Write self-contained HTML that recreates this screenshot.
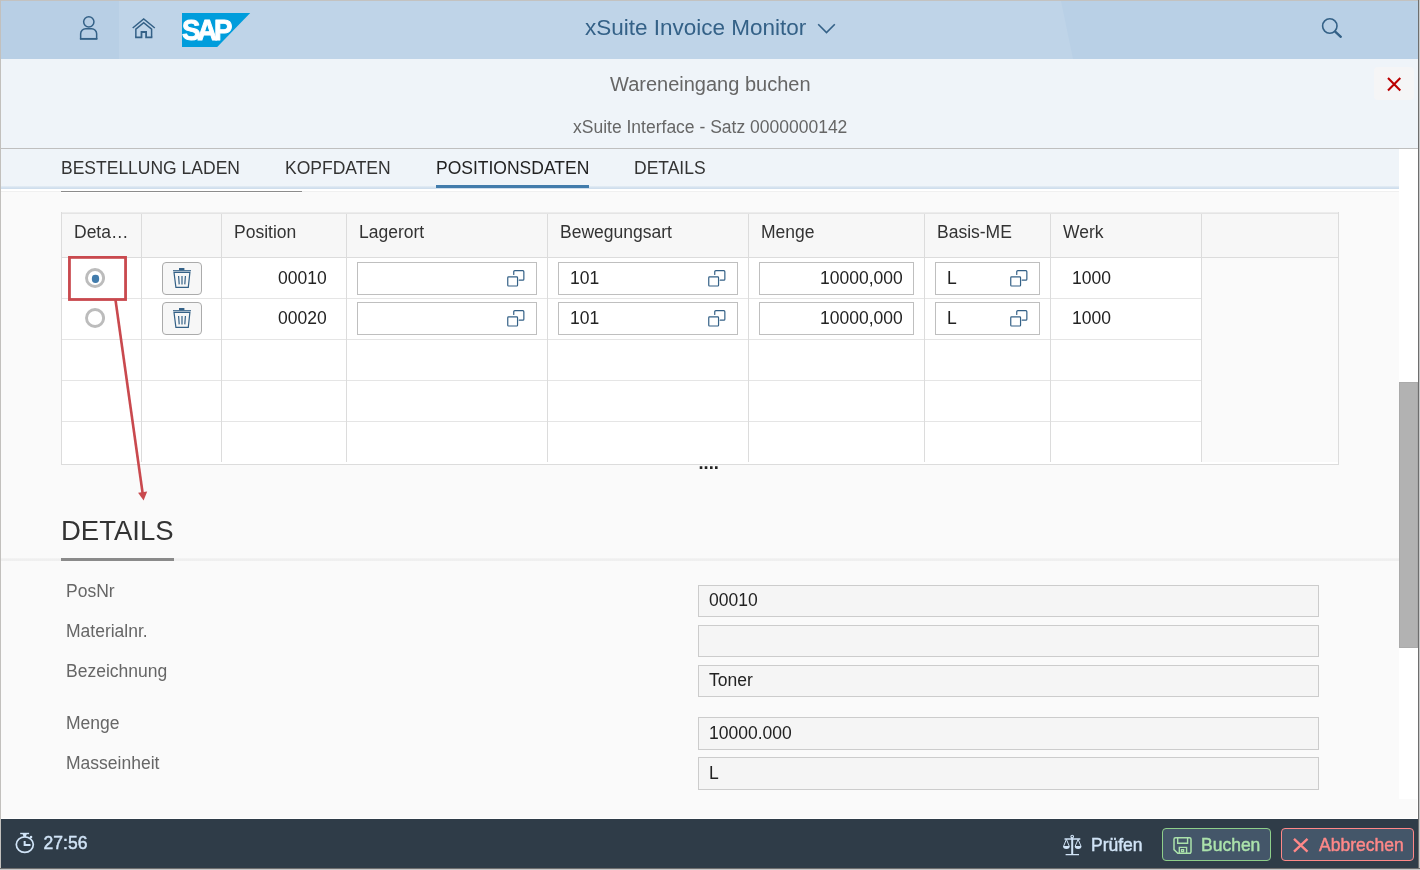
<!DOCTYPE html>
<html lang="de">
<head>
<meta charset="utf-8">
<title>xSuite Invoice Monitor</title>
<style>
html,body{margin:0;padding:0;}
body{width:1420px;height:870px;overflow:hidden;position:relative;background:#fafafa;font-family:"Liberation Sans",sans-serif;color:#333;}
#root{position:absolute;left:0;top:0;width:1420px;height:870px;will-change:transform;}
.abs{position:absolute;}
.t{position:absolute;white-space:nowrap;line-height:1;}
#frame-t{left:0;top:0;width:1420px;height:1px;background:#c3c2c0;}
#frame-l{left:0;top:0;width:1px;height:870px;background:#c2c0bd;}
#frame-r{left:1418px;top:0;width:2px;height:870px;background:linear-gradient(90deg,#6e6e6e,#6e6e6e 1px,#c8c8c8 1px);}
#frame-b{left:0;top:868px;width:1420px;height:2px;background:linear-gradient(#6e6e6e,#6e6e6e 1px,#c8c8c8 1px);}
#shell{left:1px;top:1px;width:1417px;height:58px;background:#bfd4e8;}
#shell .dk1{left:0;top:0;width:118px;height:58px;background:#b8cfe5;}
#subhdr{left:1px;top:59px;width:1417px;height:89px;background:#eff4f9;}
#subline{left:1px;top:148px;width:1417px;height:1px;background:#bfbfbf;}
#tabbar{left:1px;top:149px;width:1398px;height:37px;background:#eff4f9;}
#tabbar-b{left:1px;top:186px;width:1398px;height:3px;background:linear-gradient(#e5edf5,#d5e2ef 50%,#ccdcec);}
#content{left:1px;top:189px;width:1417px;height:630px;background:linear-gradient(#fff,#fff 2px,#fafafa 3px);}
#scroll{left:1399px;top:149px;width:19px;height:650px;background:#fff;}
#wrow{left:1px;top:818px;width:1417px;height:1px;background:#fff;}
#wcol{left:1417px;top:799px;width:1px;height:20px;background:#fff;}
#thumb{left:1399px;top:382px;width:19px;height:266px;background:#b2b2b2;box-shadow:inset 0 0 0 1px #aaa;}
#footer{left:1px;top:819px;width:1417px;height:49px;background:#2f3c48;}
.tab{font-size:17.5px;color:#333;top:160px;}
.hd{font-size:17.5px;color:#333;top:224px;}
.cell{font-size:17.5px;color:#222;}
.inp{position:absolute;box-sizing:border-box;background:#fff;border:1px solid #bfbfbf;height:33px;}
.ro{position:absolute;box-sizing:border-box;background:#f5f5f5;border:1px solid #ccc;height:32px;left:698px;width:621px;}
.lbl{font-size:17.5px;color:#666;left:66px;}
.val{font-size:17.5px;color:#222;left:709px;}
.ft{font-size:17.5px;-webkit-text-stroke:0.45px currentColor;}
.btn{position:absolute;box-sizing:border-box;border-radius:4px;height:33px;top:828px;background:#445669;}
</style>
</head>
<body>
<div id="root">
<div id="shell" class="abs"><div class="abs dk1"></div><div class="abs" style="left:1055px;top:0;width:362px;height:58px;background:#b9d0e6;clip-path:polygon(5px 0,100% 0,100% 100%,17px 100%);"></div></div>
<div id="subhdr" class="abs"></div>
<div id="subline" class="abs"></div>
<div id="tabbar" class="abs"></div>
<div id="tabbar-b" class="abs"></div>
<div id="content" class="abs"></div>
<div id="scroll" class="abs"></div>
<div id="thumb" class="abs"></div>
<div id="wrow" class="abs"></div>
<div id="wcol" class="abs"></div>
<div id="footer" class="abs"></div>
<!-- shell -->
<div class="t" id="apptitle" style="left:585px;top:17px;font-size:22.5px;color:#346187;">xSuite Invoice Monitor</div>
<!-- sub header -->
<div class="t" id="ptitle" style="left:610px;top:74px;font-size:20px;color:#666;">Wareneingang buchen</div>
<div class="t" id="psub" style="left:573px;top:119px;font-size:17.5px;color:#666;">xSuite Interface - Satz 0000000142</div>
<!-- tabs -->
<div class="t tab" style="left:61px;">BESTELLUNG LADEN</div>
<div class="t tab" style="left:285px;">KOPFDATEN</div>
<div class="t tab" style="left:436px;color:#222;">POSITIONSDATEN</div>
<div class="t tab" style="left:634px;">DETAILS</div>
<div class="abs" style="left:436px;top:185px;width:153px;height:3px;background:#427cac;"></div>
<div class="abs" style="left:1px;top:191px;width:1398px;height:1px;background:#f0f0f0;"></div>
<div class="abs" style="left:61px;top:191px;width:241px;height:2px;background:linear-gradient(#8c8c8c,#8c8c8c 1px,#fff 1px);"></div>
<!-- table -->
<div class="abs" style="left:61px;top:212px;width:1278px;height:46px;background:#f7f7f7;"></div>
<div class="abs" style="left:62px;top:258px;width:1276px;height:206px;background:#fff;"></div>
<div class="abs" style="left:1202px;top:258px;width:136px;height:204px;background:#fafafa;"></div>
<div class="abs" style="left:61px;top:212px;width:1278px;height:2px;background:linear-gradient(#ececec,#ececec 1px,#e4e4e4 1px);"></div>
<div class="abs" style="left:61px;top:257px;width:1278px;height:1px;background:#dcdcdc;"></div>
<div class="abs" style="left:61px;top:298px;width:1141px;height:1px;background:#e5e5e5;"></div>
<div class="abs" style="left:61px;top:339px;width:1141px;height:1px;background:#e5e5e5;"></div>
<div class="abs" style="left:61px;top:380px;width:1141px;height:1px;background:#e5e5e5;"></div>
<div class="abs" style="left:61px;top:421px;width:1141px;height:1px;background:#e5e5e5;"></div>
<div class="abs" style="left:61px;top:464px;width:1278px;height:1px;background:#dcdcdc;"></div>
<div class="abs" style="left:61px;top:212px;width:1px;height:253px;background:#dcdcdc;"></div>
<div class="abs" style="left:141px;top:214px;width:1px;height:43px;background:#dcdcdc;"></div>
<div class="abs" style="left:141px;top:258px;width:1px;height:204px;background:#dcdcdc;"></div>
<div class="abs" style="left:221px;top:214px;width:1px;height:43px;background:#dcdcdc;"></div>
<div class="abs" style="left:221px;top:258px;width:1px;height:204px;background:#dcdcdc;"></div>
<div class="abs" style="left:346px;top:214px;width:1px;height:43px;background:#dcdcdc;"></div>
<div class="abs" style="left:346px;top:258px;width:1px;height:204px;background:#dcdcdc;"></div>
<div class="abs" style="left:547px;top:214px;width:1px;height:43px;background:#dcdcdc;"></div>
<div class="abs" style="left:547px;top:258px;width:1px;height:204px;background:#dcdcdc;"></div>
<div class="abs" style="left:748px;top:214px;width:1px;height:43px;background:#dcdcdc;"></div>
<div class="abs" style="left:748px;top:258px;width:1px;height:204px;background:#dcdcdc;"></div>
<div class="abs" style="left:924px;top:214px;width:1px;height:43px;background:#dcdcdc;"></div>
<div class="abs" style="left:924px;top:258px;width:1px;height:204px;background:#dcdcdc;"></div>
<div class="abs" style="left:1050px;top:214px;width:1px;height:43px;background:#dcdcdc;"></div>
<div class="abs" style="left:1050px;top:258px;width:1px;height:204px;background:#dcdcdc;"></div>
<div class="abs" style="left:1201px;top:214px;width:1px;height:43px;background:#dcdcdc;"></div>
<div class="abs" style="left:1201px;top:258px;width:1px;height:204px;background:#dcdcdc;"></div>
<div class="abs" style="left:1338px;top:212px;width:1px;height:253px;background:#dcdcdc;"></div>
<div class="t hd" style="left:74px;">Deta…</div>
<div class="t hd" style="left:234px;">Position</div>
<div class="t hd" style="left:359px;">Lagerort</div>
<div class="t hd" style="left:560px;">Bewegungsart</div>
<div class="t hd" style="left:761px;">Menge</div>
<div class="t hd" style="left:937px;">Basis-ME</div>
<div class="t hd" style="left:1063px;">Werk</div>
<svg class="abs" style="left:85px;top:268px;" width="20" height="20" viewBox="0 0 20 20"><circle cx="10.05" cy="10" r="8.55" fill="#fff" stroke="#bcbcbc" stroke-width="2.9"/><rect x="6.9" y="6.8" width="7.2" height="8.1" rx="3.4" fill="#427cac"/></svg>
<div class="abs" style="left:162px;top:262px;width:40px;height:33px;box-sizing:border-box;border:1px solid #ababab;border-radius:4px;background:#f7f7f7;"></div>
<svg class="abs" style="left:173px;top:268px;" width="18" height="20" viewBox="0 0 18 20"><rect x="6" y="0" width="5.4" height="2.2" fill="#346187"/><path d="M0 2.7H18" fill="none" stroke="#346187" stroke-width="1.1"/><path d="M1 4.4H16.9L15.3 19.4H2.9Z M5.6 8L6.2 16.4 M9 8V16.4 M12.4 8L11.8 16.4" fill="none" stroke="#346187" stroke-width="1.2"/></svg>
<div class="t cell" style="left:278px;top:270px;">00010</div>
<div class="inp" style="left:357px;top:262px;width:180px;"></div>
<svg class="abs" style="left:507px;top:270px;" width="18" height="18" viewBox="0 0 18 18"><path d="M6.750,4.400V1.650a1,1 0 0 1 1,-1H15.850a1,1 0 0 1 1,1V9.150a1,1 0 0 1 -1,1H12.200" fill="none" stroke="#346187" stroke-width="1.200" stroke-linecap="round"/><rect x="0.750" y="6.850" width="9.800" height="9.150" rx="0.800" fill="none" stroke="#346187" stroke-width="1.200"/></svg>
<div class="inp" style="left:558px;top:262px;width:180px;"></div>
<div class="t cell" style="left:570px;top:270px;">101</div>
<svg class="abs" style="left:708px;top:270px;" width="18" height="18" viewBox="0 0 18 18"><path d="M6.750,4.400V1.650a1,1 0 0 1 1,-1H15.850a1,1 0 0 1 1,1V9.150a1,1 0 0 1 -1,1H12.200" fill="none" stroke="#346187" stroke-width="1.200" stroke-linecap="round"/><rect x="0.750" y="6.850" width="9.800" height="9.150" rx="0.800" fill="none" stroke="#346187" stroke-width="1.200"/></svg>
<div class="inp" style="left:759px;top:262px;width:155px;"></div>
<div class="t cell" style="left:820px;top:270px;">10000,000</div>
<div class="inp" style="left:935px;top:262px;width:105px;"></div>
<div class="t cell" style="left:947px;top:270px;">L</div>
<svg class="abs" style="left:1010px;top:270px;" width="18" height="18" viewBox="0 0 18 18"><path d="M6.750,4.400V1.650a1,1 0 0 1 1,-1H15.850a1,1 0 0 1 1,1V9.150a1,1 0 0 1 -1,1H12.200" fill="none" stroke="#346187" stroke-width="1.200" stroke-linecap="round"/><rect x="0.750" y="6.850" width="9.800" height="9.150" rx="0.800" fill="none" stroke="#346187" stroke-width="1.200"/></svg>
<div class="t cell" style="left:1072px;top:270px;">1000</div>
<svg class="abs" style="left:85px;top:308px;" width="20" height="20" viewBox="0 0 20 20"><circle cx="10.05" cy="10" r="8.55" fill="#fff" stroke="#bcbcbc" stroke-width="2.9"/></svg>
<div class="abs" style="left:162px;top:302px;width:40px;height:33px;box-sizing:border-box;border:1px solid #ababab;border-radius:4px;background:#f7f7f7;"></div>
<svg class="abs" style="left:173px;top:308px;" width="18" height="20" viewBox="0 0 18 20"><rect x="6" y="0" width="5.4" height="2.2" fill="#346187"/><path d="M0 2.7H18" fill="none" stroke="#346187" stroke-width="1.1"/><path d="M1 4.4H16.9L15.3 19.4H2.9Z M5.6 8L6.2 16.4 M9 8V16.4 M12.4 8L11.8 16.4" fill="none" stroke="#346187" stroke-width="1.2"/></svg>
<div class="t cell" style="left:278px;top:310px;">00020</div>
<div class="inp" style="left:357px;top:302px;width:180px;"></div>
<svg class="abs" style="left:507px;top:310px;" width="18" height="18" viewBox="0 0 18 18"><path d="M6.750,4.400V1.650a1,1 0 0 1 1,-1H15.850a1,1 0 0 1 1,1V9.150a1,1 0 0 1 -1,1H12.200" fill="none" stroke="#346187" stroke-width="1.200" stroke-linecap="round"/><rect x="0.750" y="6.850" width="9.800" height="9.150" rx="0.800" fill="none" stroke="#346187" stroke-width="1.200"/></svg>
<div class="inp" style="left:558px;top:302px;width:180px;"></div>
<div class="t cell" style="left:570px;top:310px;">101</div>
<svg class="abs" style="left:708px;top:310px;" width="18" height="18" viewBox="0 0 18 18"><path d="M6.750,4.400V1.650a1,1 0 0 1 1,-1H15.850a1,1 0 0 1 1,1V9.150a1,1 0 0 1 -1,1H12.200" fill="none" stroke="#346187" stroke-width="1.200" stroke-linecap="round"/><rect x="0.750" y="6.850" width="9.800" height="9.150" rx="0.800" fill="none" stroke="#346187" stroke-width="1.200"/></svg>
<div class="inp" style="left:759px;top:302px;width:155px;"></div>
<div class="t cell" style="left:820px;top:310px;">10000,000</div>
<div class="inp" style="left:935px;top:302px;width:105px;"></div>
<div class="t cell" style="left:947px;top:310px;">L</div>
<svg class="abs" style="left:1010px;top:310px;" width="18" height="18" viewBox="0 0 18 18"><path d="M6.750,4.400V1.650a1,1 0 0 1 1,-1H15.850a1,1 0 0 1 1,1V9.150a1,1 0 0 1 -1,1H12.200" fill="none" stroke="#346187" stroke-width="1.200" stroke-linecap="round"/><rect x="0.750" y="6.850" width="9.800" height="9.150" rx="0.800" fill="none" stroke="#346187" stroke-width="1.200"/></svg>
<div class="t cell" style="left:1072px;top:310px;">1000</div>
<div class="t" id="dots" style="left:698.5px;top:454.3px;font-size:18.3px;font-weight:bold;color:#222;">....</div>
<!-- annotation -->
<svg class="abs" style="left:60px;top:250px;" width="100" height="260" viewBox="60 250 100 260"><rect x="69.45" y="257.4" width="56.1" height="42.1" fill="none" stroke="#c9494e" stroke-width="2.8"/><line x1="115.5" y1="300" x2="142.6" y2="493" stroke="#c9494e" stroke-width="2.6"/><polygon points="138.100,492.700 147.200,491.500 143.600,500.400" fill="#c9494e"/></svg>
<!-- details -->
<div class="t" style="left:61px;top:517px;font-size:27.5px;color:#333;">DETAILS</div>
<div class="abs" style="left:1px;top:558px;width:1398px;height:3px;background:linear-gradient(#f6f6f6,#efefef 1px,#f0f0f0);"></div>
<div class="abs" style="left:61px;top:558px;width:113px;height:3px;background:#8a8a8a;"></div>
<div class="t lbl" style="top:583px;">PosNr</div>
<div class="ro" style="top:585px;height:32px;"></div>
<div class="t val" style="top:592px;">00010</div>
<div class="t lbl" style="top:623px;">Materialnr.</div>
<div class="ro" style="top:625px;height:32px;"></div>
<div class="t lbl" style="top:663px;">Bezeichnung</div>
<div class="ro" style="top:665px;height:32px;"></div>
<div class="t val" style="top:672px;">Toner</div>
<div class="t lbl" style="top:715px;">Menge</div>
<div class="ro" style="top:717px;height:33px;"></div>
<div class="t val" style="top:725px;">10000.000</div>
<div class="t lbl" style="top:755px;">Masseinheit</div>
<div class="ro" style="top:757px;height:33px;"></div>
<div class="t val" style="top:765px;">L</div>
<!-- footer -->
<div class="t ft" style="left:43.6px;top:835px;color:#d1e4f7;">27:56</div>
<div class="t ft" style="left:1091px;top:837px;color:#d1e4f7;">Prüfen</div>
<div class="btn" style="left:1162px;width:109px;border:1px solid #8ecf8a;"></div>
<div class="t ft" style="left:1201px;top:837px;color:#abe2ab;">Buchen</div>
<div class="btn" style="left:1281px;width:133px;border:1px solid #ff8888;"></div>
<div class="t ft" style="left:1319px;top:837px;color:#ff8888;">Abbrechen</div>
<!-- icons -->
<svg class="abs" style="left:76px;top:12px;" width="26" height="32" viewBox="76 12 26 32"><circle cx="88.8" cy="21.8" r="5.15" fill="none" stroke="#346187" stroke-width="1.5"/><path d="M80.65 38.9V33.700a5 5 0 0 1 5-5h6a5 5 0 0 1 5 5V38.900" fill="none" stroke="#346187" stroke-width="1.500"/><path d="M79.900 38.900H97.400" fill="none" stroke="#346187" stroke-width="1.900"/></svg>
<svg class="abs" style="left:128px;top:14px;" width="32" height="28" viewBox="128 14 32 28"><path d="M132.700,28 L143.700,18.900 L154.800,28" fill="none" stroke="#346187" stroke-width="1.5"/><path d="M135.850,37.300V29.200L143.700,22.700L151.600,29.200V37.300" fill="none" stroke="#346187" stroke-width="1.5"/><path d="M135.100,37.350H141.500V32H146.100V37.350H152.350" fill="none" stroke="#346187" stroke-width="1.8"/></svg>
<svg class="abs" style="left:182px;top:13px;" width="69" height="34" viewBox="0 0 69 34"><polygon points="0,0 68.200,0 35.200,34 0,34" fill="#009ddc"/><text x="-0.100" y="26.900" font-family="Liberation Sans, sans-serif" font-weight="bold" font-size="30" fill="#fff" stroke="#fff" stroke-width="1" stroke-linejoin="round" letter-spacing="-3.400" transform="scale(0.920,1)">SAP</text></svg>
<svg class="abs" style="left:814px;top:20px;" width="26" height="18" viewBox="814 20 26 18"><path d="M818.200,24.200L826.500,32.500L834.800,24.200" fill="none" stroke="#346187" stroke-width="1.6"/></svg>
<svg class="abs" style="left:1318px;top:14px;" width="28" height="28" viewBox="1318 14 28 28"><circle cx="1329.800" cy="26" r="7.200" fill="none" stroke="#346187" stroke-width="1.6"/><path d="M1335.200,31.600L1340.800,36.800" fill="none" stroke="#346187" stroke-width="2.400" stroke-linecap="round"/></svg>
<div class="abs" style="left:1374px;top:67px;width:40px;height:33px;border-radius:4px;background:#f5f5f6;"></div>
<svg class="abs" style="left:1384px;top:74px;" width="20" height="20" viewBox="1384 74 20 20"><path d="M1388,78L1400.300,90.400M1400.300,78L1388,90.400" fill="none" stroke="#bb0000" stroke-width="2.100"/></svg>
<svg class="abs" style="left:12px;top:830px;" width="26" height="26" viewBox="12 830 26 26"><ellipse cx="24.800" cy="844.600" rx="8.500" ry="7.800" fill="none" stroke="#d1e4f7" stroke-width="1.700"/><path d="M20.200,833.500H29.100" fill="none" stroke="#d1e4f7" stroke-width="1.400"/><polygon points="22.600,834 26.800,834 25.700,836.900 23.700,836.900" fill="#d1e4f7"/><circle cx="31.100" cy="836.900" r="1.200" fill="#d1e4f7"/><path d="M31.100,836.900L29.800,838.300" fill="none" stroke="#d1e4f7" stroke-width="1.600"/><path d="M24.650,841.100V845.100H30.500" fill="none" stroke="#d1e4f7" stroke-width="2"/></svg>
<svg class="abs" style="left:1060px;top:832px;" width="24" height="26" viewBox="1060 832 24 26"><circle cx="1072.200" cy="836.600" r="1.300" fill="none" stroke="#d1e4f7" stroke-width="1.100"/><path d="M1072.200,838V854" fill="none" stroke="#d1e4f7" stroke-width="2"/><path d="M1064.500,839H1080.300M1065.600,854.600H1079" fill="none" stroke="#d1e4f7" stroke-width="1.300"/><path d="M1063.700,846L1066.400,839.300L1069.200,846M1075.300,846L1078.100,839.300L1080.900,846" fill="none" stroke="#d1e4f7" stroke-width="1"/><path d="M1063,846H1069.800A3.400,2.900 0 0 1 1063,846ZM1074.700,846H1081.500A3.400,2.900 0 0 1 1074.700,846Z" fill="#d1e4f7"/></svg>
<svg class="abs" style="left:1170px;top:834px;" width="24" height="24" viewBox="1170 834 24 24"><path d="M1174,839.200A1.500,1.500 0 0 1 1175.500,837.700H1189.500A1.500,1.500 0 0 1 1191,839.200V851.800A1.500,1.500 0 0 1 1189.500,853.300H1177.800L1174,849.600Z" fill="none" stroke="#abe2ab" stroke-width="1.500"/><path d="M1177.700,838V843.200H1187.600V838M1179.300,853V847.400H1186.600V853M1181.500,849.600H1183.600V851.600H1181.500Z" fill="none" stroke="#abe2ab" stroke-width="1.400"/></svg>
<svg class="abs" style="left:1290px;top:835px;" width="22" height="22" viewBox="1290 835 22 22"><path d="M1294,838.900L1307.500,851.600M1307.500,838.900L1294,851.600" fill="none" stroke="#ff8888" stroke-width="2.400"/></svg>

<!-- frame -->
<div id="frame-t" class="abs"></div>
<div id="frame-l" class="abs"></div>
<div id="frame-r" class="abs"></div>
<div id="frame-b" class="abs"></div>
</div>
</body>
</html>
